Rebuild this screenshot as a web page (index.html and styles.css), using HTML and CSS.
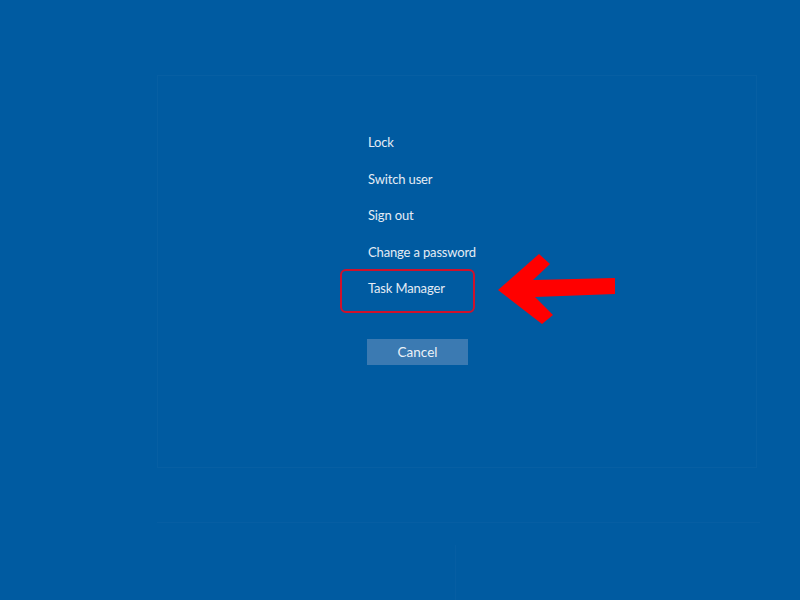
FILE: index.html
```html
<!DOCTYPE html>
<html>
<head>
<meta charset="utf-8">
<link rel="stylesheet" href="styles.css">
</head>
<body>
<div class="screen">
  <div class="panel">
    <ul class="menu">
      <li class="item">Lock</li>
      <li class="item">Switch user</li>
      <li class="item">Sign out</li>
      <li class="item">Change a password</li>
      <li class="item item-marked">Task Manager</li>
    </ul>
    <button class="cancel">Cancel</button>
  </div>
  <div class="seam-h"></div>
  <div class="seam-v"></div>
  <svg class="arrow" width="800" height="600" viewBox="0 0 800 600">
    <polygon points="498,290 539,254 550,264 533,280 615,278 615,294 535,297 553,315 542,324" fill="#ff0000"/>
  </svg>
</div>
</body>
</html>
```
FILE: styles.css
```css
* { box-sizing: border-box; }
html, body { margin: 0; padding: 0; }
body {
  background: #005ba1;
  font-family: "Lato", "Noto Sans", sans-serif;
}
.screen {
  position: relative;
  width: 800px;
  height: 600px;
  overflow: hidden;
  padding-top: 75px;
  padding-left: 157px;
}
.panel {
  width: 600px;
  height: 393px;
  border: 1px solid rgba(255, 255, 255, 0.028);
  padding-top: 48px;
  padding-left: 210px;
}
.menu {
  list-style: none;
  margin: 0;
  padding: 0;
}
.item {
  position: relative;
  height: 36.5px;
  display: flex;
  align-items: center;
  color: #e4ecf5;
  font-size: 13px;
  letter-spacing: -0.15px;
}
.item-marked::before {
  content: "";
  position: absolute;
  left: -28px;
  top: -1px;
  width: 131px;
  height: 40px;
  border: 2px solid #d0112b;
  border-radius: 6px;
}
.cancel {
  display: block;
  margin-top: 32.5px;
  margin-left: -1px;
  width: 101px;
  height: 26px;
  border: none;
  background: #3b7ab2;
  color: #eaf1f8;
  font-family: "Lato", "Noto Sans", sans-serif;
  font-size: 13.5px;
  padding: 0;
}
.seam-h {
  width: 603px;
  height: 1px;
  margin-top: 54px;
  background: rgba(255, 255, 255, 0.025);
}
.seam-v {
  width: 1px;
  height: 60px;
  margin-top: 22px;
  margin-left: 298px;
  background: rgba(255, 255, 255, 0.025);
}
.arrow {
  position: absolute;
  left: 0;
  top: 0;
}
```
